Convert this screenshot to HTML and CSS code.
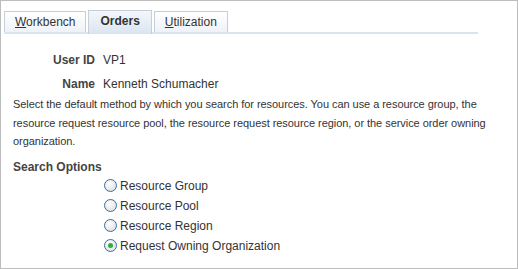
FILE: index.html
```html
<!DOCTYPE html>
<html lang="en">
<head>
  <meta charset="UTF-8">
  <title>Orders</title>
  <link rel="stylesheet" href="styles.css">
</head>
<body>
  <div class="page">
    <div class="tabs">
      <div class="tab"><u>W</u>orkbench</div>
      <div class="tab active">Orders</div>
      <div class="tab"><u>U</u>tilization</div>
    </div>

    <div class="fields">
      <div class="label">User ID</div>
      <div class="value">VP1</div>
      <div class="label">Name</div>
      <div class="value">Kenneth Schumacher</div>
    </div>

    <p class="intro">Select the default method by which you search for resources. You can use a resource group, the resource request resource pool, the resource request resource region, or the service order owning organization.</p>

    <div class="section-title">Search Options</div>
    <div class="options">
      <label class="option"><span class="radio"></span>Resource Group</label>
      <label class="option"><span class="radio"></span>Resource Pool</label>
      <label class="option"><span class="radio"></span>Resource Region</label>
      <label class="option"><span class="radio checked"></span>Request Owning Organization</label>
    </div>
  </div>
</body>
</html>
```

FILE: styles.css
```css
body {
  margin: 0;
  font-family: "Liberation Sans", Arial, sans-serif;
  font-size: 12px;
  color: #333;
  background: #fff;
}

.page {
  width: 518px;
  height: 269px;
  box-sizing: border-box;
  border: 1px solid #bdbdbd;
}

.tabs {
  display: flex;
  align-items: flex-end;
  gap: 2px;
  width: 474px;
  margin-left: 3px;
  padding-top: 9px;
  border-bottom: 2px solid #dae3f0;
}

.tab {
  height: 20px;
  line-height: 20px;
  padding: 0 10px;
  border: 1px solid #c5cedb;
  border-bottom: none;
  background: linear-gradient(#ffffff, #eef2f7);
  color: #333;
}

.tab.active {
  height: 23px;
  line-height: 21px;
  padding: 0 11px;
  font-weight: bold;
  background: linear-gradient(#f4f7fb, #dae4f1);
  margin-bottom: -2px;
}

.fields {
  display: grid;
  grid-template-columns: 83px auto;
  column-gap: 8px;
  row-gap: 4px;
  margin: 16px 0 0 11px;
  line-height: 20px;
}

.label {
  text-align: right;
  font-weight: bold;
  color: #444;
}

.intro {
  margin: 1px 12px 0 12px;
  font-size: 11px;
  letter-spacing: -0.05px;
  line-height: 18.5px;
}

.section-title {
  margin: 7px 0 0 12px;
  line-height: 18px;
  font-weight: bold;
  color: #444;
}

.options {
  display: flex;
  flex-direction: column;
  margin-left: 103px;
}

.option {
  display: flex;
  align-items: center;
  gap: 3px;
  height: 20px;
}

.radio {
  width: 11px;
  height: 11px;
  border: 1px solid #3a6da6;
  border-radius: 50%;
  background: radial-gradient(circle at 40% 35%, #ffffff, #d8d8d8);
  display: flex;
  align-items: center;
  justify-content: center;
}

.radio.checked::after {
  content: "";
  width: 5px;
  height: 5px;
  border-radius: 50%;
  background: #2fae3a;
}
```
